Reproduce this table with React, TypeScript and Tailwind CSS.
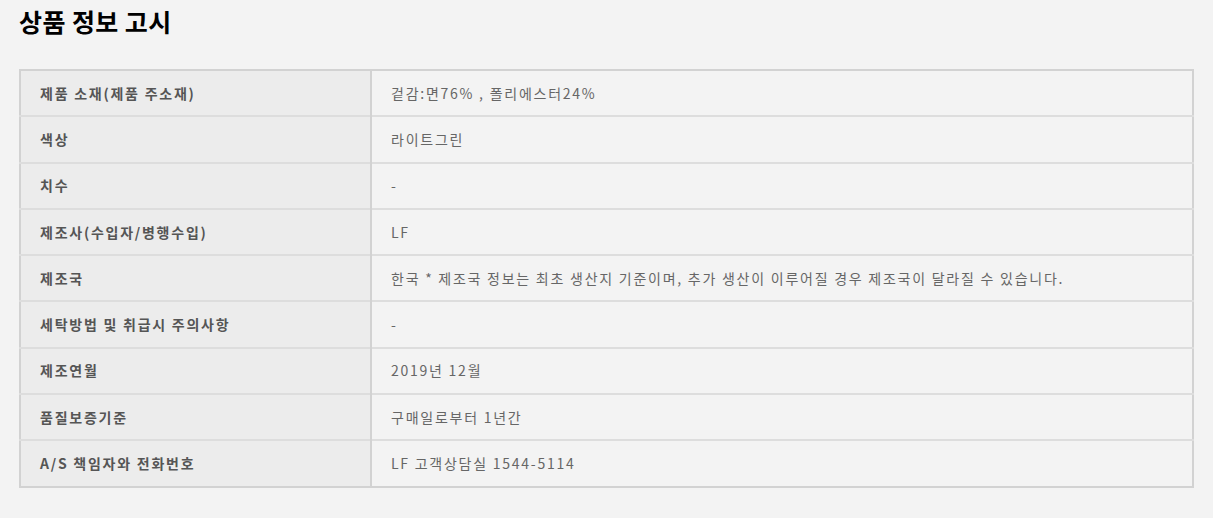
import React from 'react';

// 상품 정보 고시 테이블
const rows: { label: string; value: string }[] = [
  { label: '제품 소재(제품 주소재)', value: '겉감:면76% , 폴리에스터24%' },
  { label: '색상', value: '라이트그린' },
  { label: '치수', value: '-' },
  { label: '제조사(수입자/병행수입)', value: 'LF' },
  {
    label: '제조국',
    value: '한국 * 제조국 정보는 최초 생산지 기준이며, 추가 생산이 이루어질 경우 제조국이 달라질 수 있습니다.',
  },
  { label: '세탁방법 및 취급시 주의사항', value: '-' },
  { label: '제조연월', value: '2019년 12월' },
  { label: '품질보증기준', value: '구매일로부터 1년간' },
  { label: 'A/S 책임자와 전화번호', value: 'LF 고객상담실 1544-5114' },
];

export default function App() {
  return (
    <div
      className="min-h-[518px] w-full bg-[#f3f3f3] px-[19px] pt-[3px] pb-8"
      style={{ fontFamily: '"Noto Sans CJK KR", "Noto Sans", sans-serif' }}
    >
      <h2 className="text-[25px] font-bold leading-[36px] text-black tracking-[0.4px]">상품 정보 고시</h2>

      <table className="mt-[30px] w-[1175px] border-collapse border-2 border-[#d2d2d2] text-[14px] tracking-[1.75px]">
        <tbody>
          {rows.map((row) => (
            <tr key={row.label} className="h-[46.3px] border-b-2 border-[#dddddd] last:border-b-0">
              <td className="w-[351px] border-r-2 border-[#d2d2d2] bg-[#ececec] pl-[19px] align-middle font-semibold text-[#555555]">
                {row.label}
              </td>
              <td className="pl-[19px] align-middle text-[#666666]">{row.value}</td>
            </tr>
          ))}
        </tbody>
      </table>
    </div>
  );
}
